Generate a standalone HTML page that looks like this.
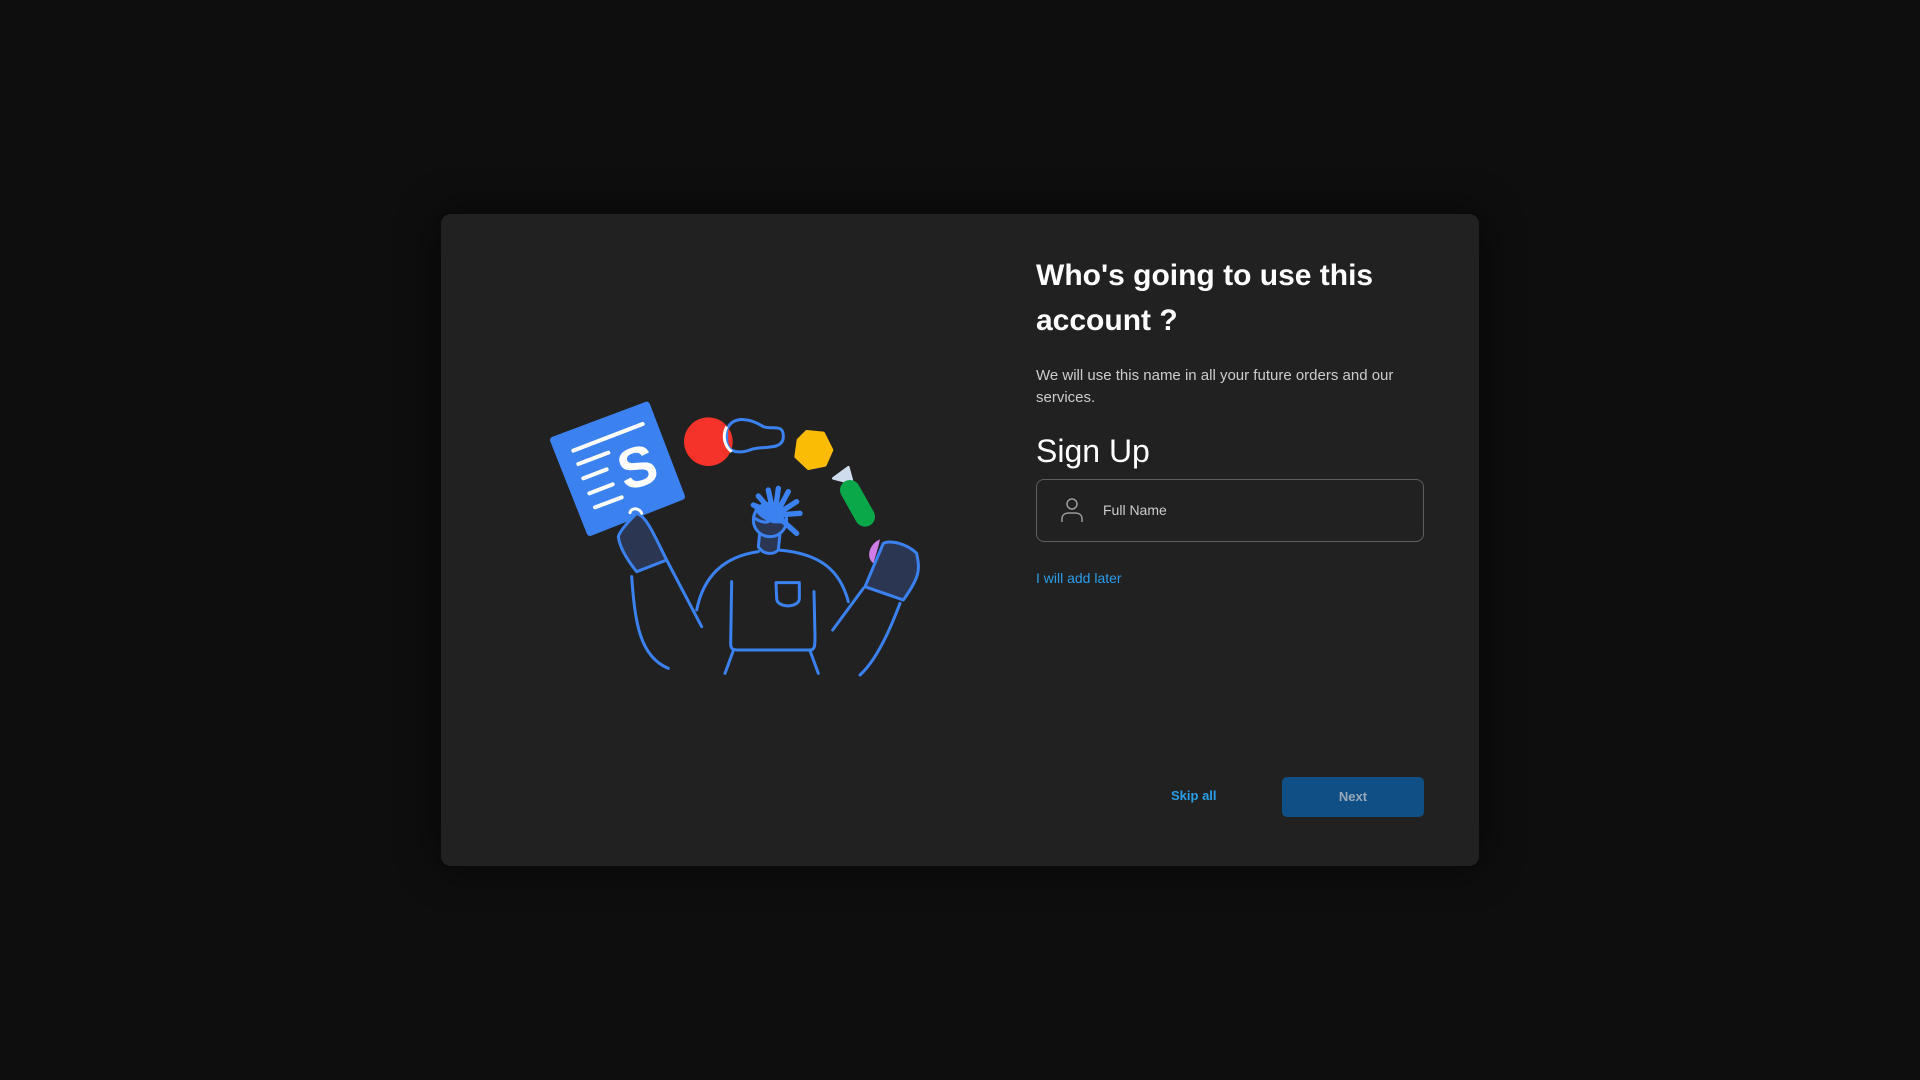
<!DOCTYPE html>
<html><head><meta charset="utf-8"><style>
*{margin:0;padding:0;box-sizing:border-box}
html,body{width:1920px;height:1080px;background:#0e0e0e;overflow:hidden;font-family:"Liberation Sans",sans-serif}
.card{position:absolute;left:441px;top:214px;width:1038px;height:652px;background:#212121;border-radius:10px;box-shadow:0 0 40px rgba(0,0,0,.6)}
.h{position:absolute;left:1036px;top:253px;width:400px;color:#fff;font-size:30px;font-weight:bold;line-height:45px}
.p{position:absolute;left:1036px;top:365px;width:400px;color:#ccc;font-size:15px;line-height:22px}
.su{position:absolute;left:1036px;top:429px;color:#fff;font-size:32px;line-height:44px}
.in{position:absolute;left:1036px;top:479px;width:388px;height:63px;border:1px solid #5e5e5e;border-radius:8px}
.in span{position:absolute;left:66px;top:22px;color:#ccc;font-size:14px}
.lk{position:absolute;left:1036px;top:570px;color:#2b9de8;font-size:14px}
.sk{position:absolute;left:1171px;top:788px;color:#2b9de8;font-size:13px;font-weight:bold}
.nx{position:absolute;left:1282px;top:777px;width:142px;height:40px;background:#0f4f86;border-radius:5px;color:#9aa9b8;font-size:13px;font-weight:bold;text-align:center;line-height:40px}
</style></head><body>
<div class="card"></div>
<svg style="position:absolute;left:540px;top:390px" width="400" height="300" viewBox="0 0 1200 900">
<g>
<polygon points="40,150 320,45 425,320 150,428" fill="#3b82f0" stroke="#3b82f0" stroke-width="20" stroke-linejoin="round"/>
<g stroke="#fff" stroke-width="12" stroke-linecap="round"><line x1="100" y1="182" x2="308" y2="102"/><line x1="115" y1="222" x2="205" y2="188"/><line x1="130" y1="265" x2="200" y2="238"/><line x1="148" y1="310" x2="218" y2="283"/><line x1="165" y1="352" x2="245" y2="322"/></g>
<text x="235" y="290" fill="#fff" font-size="170" font-weight="bold" font-family="Liberation Sans" transform="rotate(-18 290 230)">S</text>
<circle cx="505" cy="155" r="73" fill="#f5332a"/>
<path d="M560,120 C580,70 640,90 670,110 C700,120 730,100 730,140 C730,185 660,165 630,180 C600,190 560,190 560,150Z" fill="none" stroke="#3b82f0" stroke-width="9"/>
<path d="M560,110 C545,140 555,170 575,185" fill="none" stroke="#fff" stroke-width="9"/>
<polygon points="800,125 850,130 875,180 855,225 805,235 768,200 775,150" fill="#fbbc05" stroke="#fbbc05" stroke-width="10" stroke-linejoin="round"/>
<polygon points="925,232 938,280 880,265" fill="#cfdcee" stroke="#cfdcee" stroke-width="8" stroke-linejoin="round"/>
<line x1="930" y1="300" x2="975" y2="380" stroke="#0ba84a" stroke-width="60" stroke-linecap="round"/>
<path d="M1020,448 C990,460 975,500 1000,520 L1015,470Z" fill="#d07de8"/>
<g fill="#2a3652" stroke="#3b82f0" stroke-width="9" stroke-linejoin="round" stroke-linecap="round">
<path d="M655,470 L660,420 L720,430 L715,480 C700,495 670,495 655,470Z"/>
<circle cx="690" cy="390" r="50"/>
<path d="M235,440 C240,420 280,380 290,370 C320,380 340,430 380,510 L290,545 C270,520 240,480 235,440Z"/>
<path d="M975,590 L1030,460 C1050,450 1100,460 1130,490 C1140,540 1140,560 1090,630Z"/>
</g>
<g stroke="#3b82f0" stroke-width="16" stroke-linecap="round" fill="none">
<line x1="700" y1="370" x2="640" y2="345"/><line x1="700" y1="370" x2="655" y2="318"/><line x1="700" y1="370" x2="685" y2="300"/><line x1="705" y1="370" x2="715" y2="295"/><line x1="710" y1="370" x2="745" y2="305"/><line x1="712" y1="372" x2="770" y2="335"/><line x1="712" y1="375" x2="780" y2="370"/><line x1="712" y1="378" x2="770" y2="430"/>
</g>
<path d="M640,350 C670,345 720,360 745,400 L700,400 C670,390 650,375 640,350Z" fill="#3b82f0"/>
<g fill="none" stroke="#3b82f0" stroke-width="9" stroke-linecap="round" stroke-linejoin="round">
<path d="M470,660 C490,560 550,500 655,485 M715,480 C840,490 900,540 925,635"/>
<path d="M275,560 C285,700 300,800 385,835"/>
<path d="M380,510 L485,710"/>
<path d="M1080,640 C1050,720 1010,810 960,855"/>
<path d="M970,595 L878,720"/>
<path d="M575,575 L572,760 C572,780 580,780 600,780 L810,780 C825,780 825,765 825,740 L822,605"/>
<path d="M580,782 L555,850 M810,782 L835,850"/>
<path d="M708,578 L778,578 L778,625 C778,655 710,655 710,625Z"/>
<path d="M270,368 C275,350 300,355 305,370" stroke="#fff"/>
<path d="M645,385 C660,395 675,398 685,395"/>
</g>
</g>
</svg>
<div class="h">Who's going to use this account ?</div>
<div class="p">We will use this name in all your future orders and our services.</div>
<div class="su">Sign Up</div>
<div class="in"><svg style="position:absolute;left:23px;top:17px" width="24" height="26" viewBox="0 0 24 26" fill="none" stroke="#999" stroke-width="1.5"><circle cx="12" cy="7" r="5"/><path d="M2,25 V22 C2,18 5,16 9,16 H15 C19,16 22,18 22,22 V25"/></svg><span>Full Name</span></div>
<div class="lk">I will add later</div>
<div class="sk">Skip all</div>
<div class="nx">Next</div>
</body></html>
